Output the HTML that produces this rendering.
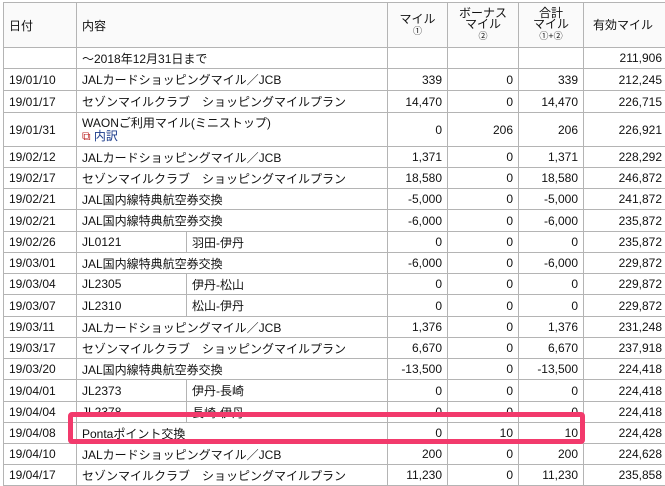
<!DOCTYPE html>
<html><head><meta charset="utf-8"><style>
body{margin:0;background:#fff;width:665px;height:486px;overflow:hidden;position:relative;font-family:"Liberation Sans","Noto Sans CJK JP",sans-serif;font-size:12px;color:#111}
table{position:absolute;left:3px;top:2px;border-collapse:collapse;table-layout:fixed;width:664px}
td{border:1px solid #b4b4b4;padding:0 5px;white-space:nowrap;overflow:hidden;vertical-align:middle}
td.n{text-align:right}
tr.h td{height:44px;background:#fafafa}
tr.h td.c{text-align:center;line-height:11px;font-size:12px}
.s{font-size:9px}
.box{position:absolute;left:68px;top:412px;width:507px;height:22px;border:5px solid #f23a6c;border-radius:4px}
.link{color:#1a3a8a}
</style></head><body>
<table>
<colgroup><col style="width:73px"><col style="width:110px"><col style="width:201px"><col style="width:60px"><col style="width:71px"><col style="width:65px"><col style="width:84px"></colgroup>
<tr class="h"><td>日付</td><td colspan="2">内容</td><td class="c">マイル<br><span class="s">①</span></td><td class="c">ボーナス<br>マイル<br><span class="s">②</span></td><td class="c">合計<br>マイル<br><span class="s">①+②</span></td><td class="c" style="text-align:left;padding-left:9px">有効マイル</td></tr>
<tr style="height:21px"><td></td><td colspan="2">～2018年12月31日まで</td><td></td><td></td><td></td><td class="n">211,906</td></tr>
<tr style="height:22px"><td>19/01/10</td><td colspan="2">JALカードショッピングマイル／JCB</td><td class="n">339</td><td class="n">0</td><td class="n">339</td><td class="n">212,245</td></tr>
<tr style="height:22px"><td>19/01/17</td><td colspan="2">セゾンマイルクラブ　ショッピングマイルプラン</td><td class="n">14,470</td><td class="n">0</td><td class="n">14,470</td><td class="n">226,715</td></tr>
<tr style="height:34px"><td>19/01/31</td><td colspan="2" style="line-height:13px">WAONご利用マイル(ミニストップ)<br><span style="color:#b22">⧉</span> <span class="link">内訳</span></td><td class="n">0</td><td class="n">206</td><td class="n">206</td><td class="n">226,921</td></tr>
<tr style="height:21px"><td>19/02/12</td><td colspan="2">JALカードショッピングマイル／JCB</td><td class="n">1,371</td><td class="n">0</td><td class="n">1,371</td><td class="n">228,292</td></tr>
<tr style="height:21px"><td>19/02/17</td><td colspan="2">セゾンマイルクラブ　ショッピングマイルプラン</td><td class="n">18,580</td><td class="n">0</td><td class="n">18,580</td><td class="n">246,872</td></tr>
<tr style="height:21px"><td>19/02/21</td><td colspan="2">JAL国内線特典航空券交換</td><td class="n">-5,000</td><td class="n">0</td><td class="n">-5,000</td><td class="n">241,872</td></tr>
<tr style="height:22px"><td>19/02/21</td><td colspan="2">JAL国内線特典航空券交換</td><td class="n">-6,000</td><td class="n">0</td><td class="n">-6,000</td><td class="n">235,872</td></tr>
<tr style="height:21px"><td>19/02/26</td><td>JL0121</td><td>羽田-伊丹</td><td class="n">0</td><td class="n">0</td><td class="n">0</td><td class="n">235,872</td></tr>
<tr style="height:21px"><td>19/03/01</td><td colspan="2">JAL国内線特典航空券交換</td><td class="n">-6,000</td><td class="n">0</td><td class="n">-6,000</td><td class="n">229,872</td></tr>
<tr style="height:21px"><td>19/03/04</td><td>JL2305</td><td>伊丹-松山</td><td class="n">0</td><td class="n">0</td><td class="n">0</td><td class="n">229,872</td></tr>
<tr style="height:22px"><td>19/03/07</td><td>JL2310</td><td>松山-伊丹</td><td class="n">0</td><td class="n">0</td><td class="n">0</td><td class="n">229,872</td></tr>
<tr style="height:21px"><td>19/03/11</td><td colspan="2">JALカードショッピングマイル／JCB</td><td class="n">1,376</td><td class="n">0</td><td class="n">1,376</td><td class="n">231,248</td></tr>
<tr style="height:21px"><td>19/03/17</td><td colspan="2">セゾンマイルクラブ　ショッピングマイルプラン</td><td class="n">6,670</td><td class="n">0</td><td class="n">6,670</td><td class="n">237,918</td></tr>
<tr style="height:21px"><td>19/03/20</td><td colspan="2">JAL国内線特典航空券交換</td><td class="n">-13,500</td><td class="n">0</td><td class="n">-13,500</td><td class="n">224,418</td></tr>
<tr style="height:22px"><td>19/04/01</td><td>JL2373</td><td>伊丹-長崎</td><td class="n">0</td><td class="n">0</td><td class="n">0</td><td class="n">224,418</td></tr>
<tr style="height:21px"><td>19/04/04</td><td>JL2378</td><td>長崎-伊丹</td><td class="n">0</td><td class="n">0</td><td class="n">0</td><td class="n">224,418</td></tr>
<tr style="height:21px"><td>19/04/08</td><td colspan="2">Pontaポイント交換</td><td class="n">0</td><td class="n">10</td><td class="n">10</td><td class="n">224,428</td></tr>
<tr style="height:21px"><td>19/04/10</td><td colspan="2">JALカードショッピングマイル／JCB</td><td class="n">200</td><td class="n">0</td><td class="n">200</td><td class="n">224,628</td></tr>
<tr style="height:21px"><td>19/04/17</td><td colspan="2">セゾンマイルクラブ　ショッピングマイルプラン</td><td class="n">11,230</td><td class="n">0</td><td class="n">11,230</td><td class="n">235,858</td></tr>
</table>
<div class="box"></div>
</body></html>
